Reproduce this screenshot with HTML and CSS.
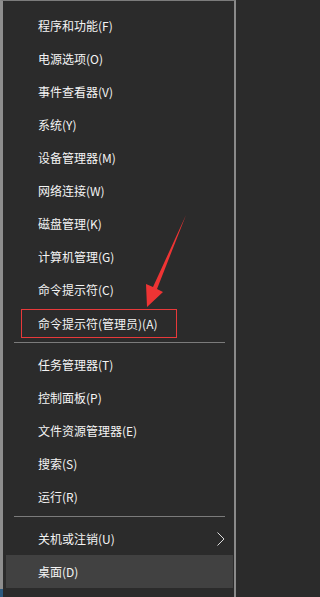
FILE: index.html
```html
<!DOCTYPE html>
<html lang="zh-CN">
<head>
<meta charset="utf-8">
<title>Win+X 菜单</title>
<link rel="stylesheet" href="styles.css">
</head>
<body>
<div class="menu">
  <ul class="group">
    <li class="item"><span class="label">程序和功能(F)</span></li>
    <li class="item"><span class="label">电源选项(O)</span></li>
    <li class="item"><span class="label">事件查看器(V)</span></li>
    <li class="item"><span class="label">系统(Y)</span></li>
    <li class="item"><span class="label">设备管理器(M)</span></li>
    <li class="item"><span class="label">网络连接(W)</span></li>
    <li class="item"><span class="label">磁盘管理(K)</span></li>
    <li class="item"><span class="label">计算机管理(G)</span></li>
    <li class="item"><span class="label">命令提示符(C)</span></li>
    <li class="item"><span class="label marked">命令提示符(管理员)(A)</span></li>
  </ul>
  <div class="sep"></div>
  <ul class="group">
    <li class="item"><span class="label">任务管理器(T)</span></li>
    <li class="item"><span class="label">控制面板(P)</span></li>
    <li class="item"><span class="label">文件资源管理器(E)</span></li>
    <li class="item"><span class="label">搜索(S)</span></li>
    <li class="item"><span class="label">运行(R)</span></li>
  </ul>
  <div class="sep"></div>
  <ul class="group">
    <li class="item submenu"><span class="label">关机或注销(U)</span>
      <svg class="chev" width="8" height="14" viewBox="0 0 8 14"><polyline points="0.5,0.5 7,7 0.5,13.5" fill="none" stroke="#dcdcdc" stroke-width="1"/></svg>
    </li>
    <li class="item active"><span class="label">桌面(D)</span></li>
  </ul>
  <div class="corner"></div>
</div>
<svg class="arrow" width="236" height="597" viewBox="0 0 236 597">
  <polygon points="186,215 157,289 163,292 147,307 146,284 153,287" fill="#ee3434"/>
</svg>
</body>
</html>
```

FILE: styles.css
```css
html, body {
  margin: 0;
  padding: 0;
}
body {
  width: 236px;
  height: 597px;
  background: #2b2b2b;
  font-family: "Noto Sans CJK SC", "Microsoft YaHei", sans-serif;
  font-size: 12px;
  color: #f4f4f4;
  position: relative;
  overflow: hidden;
}
.menu {
  box-sizing: border-box;
  width: 236px;
  height: 597px;
  background: #2b2b2b;
  border-top: 1px solid #7c7c7c;
  border-left: 3px solid #8e8e8e;
  border-right: 2px solid #8a8a8a;
  padding: 8px 1px 0 3px;
  position: relative;
}
.group {
  list-style: none;
  margin: 0;
  padding: 0;
}
.item {
  height: 33px;
  display: flex;
  align-items: center;
  justify-content: space-between;
  padding: 0 8px 0 32px;
  line-height: 1;
  white-space: nowrap;
}
.item.active {
  background: #414141;
}
.label {
  display: inline-flex;
  align-items: center;
}
.label.marked {
  box-sizing: border-box;
  height: 29px;
  margin-left: -17px;
  margin-top: 2px;
  padding: 0 18px 0 16px;
  border: 1px solid #e8393a;
}
.sep {
  height: 1px;
  background: #7b7b7b;
  margin: 3px 8px 5px 8px;
}
.chev {
  display: block;
}
.corner {
  position: absolute;
  left: -3px;
  bottom: 0;
  width: 3px;
  height: 8px;
  background: #2c5a80;
}
.arrow {
  position: absolute;
  left: 0;
  top: 0;
  pointer-events: none;
}
```
